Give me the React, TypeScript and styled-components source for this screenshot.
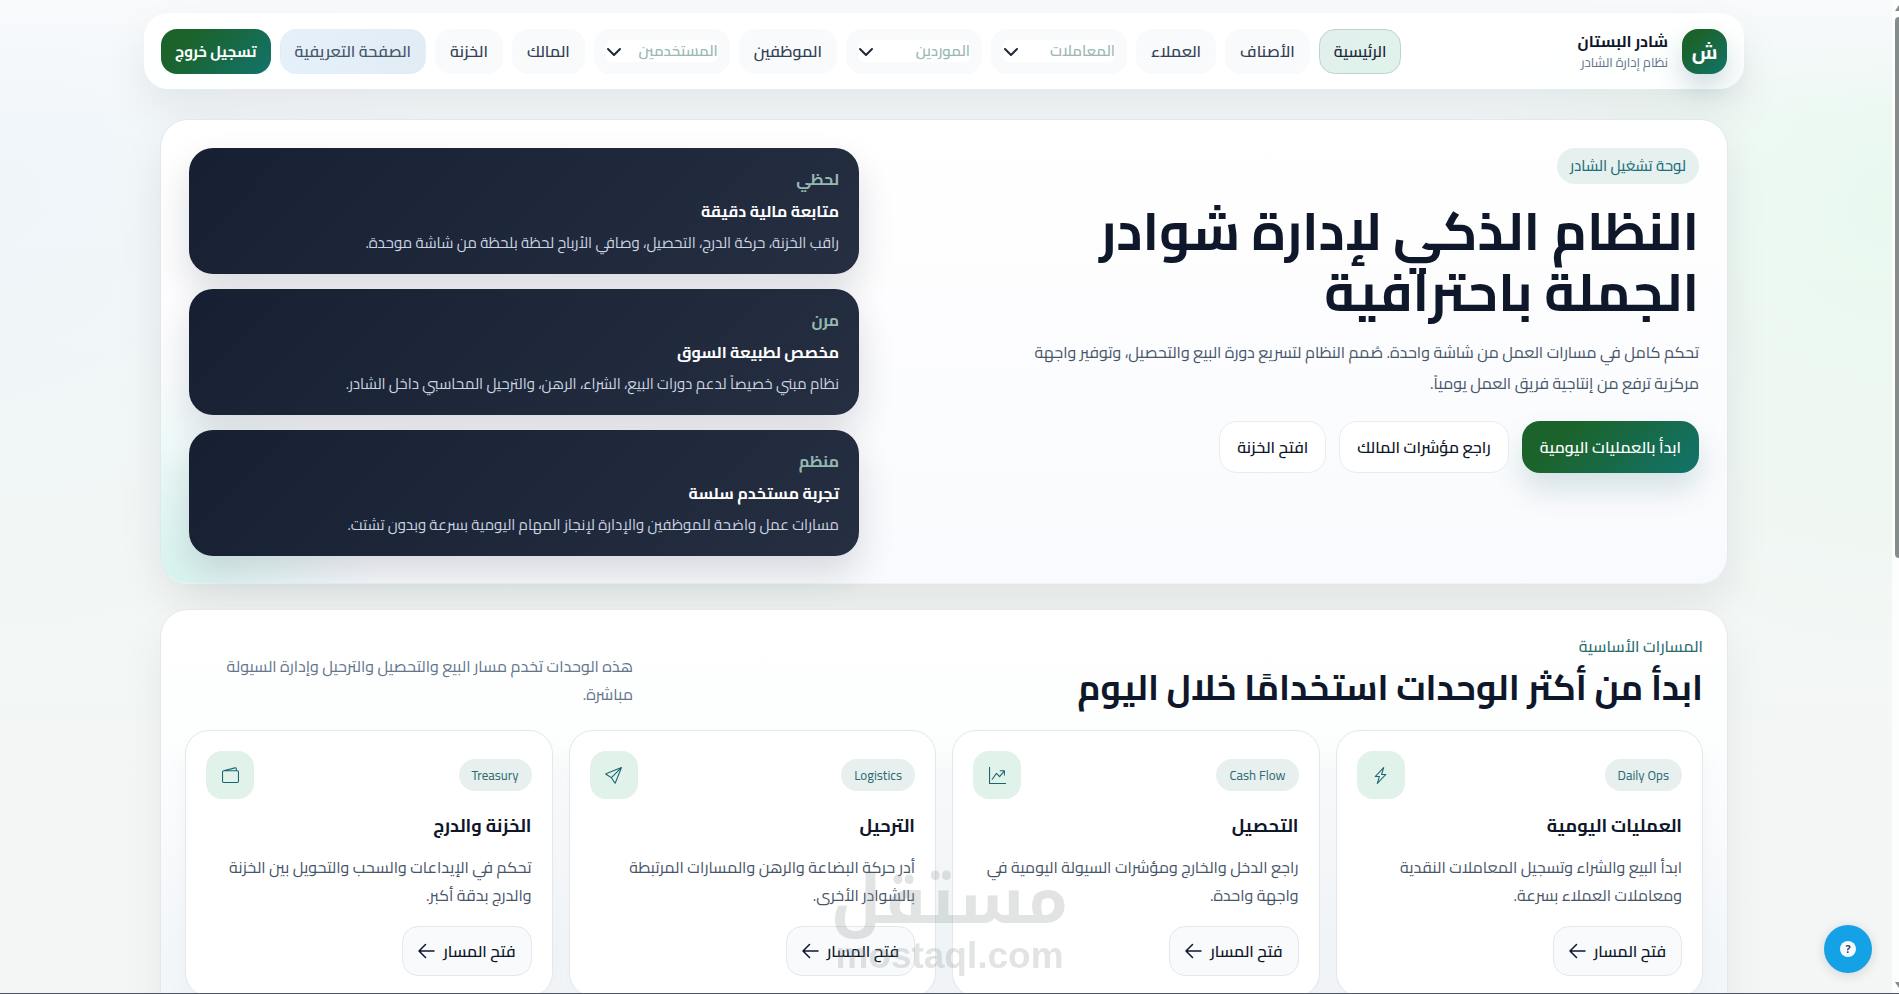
import React from 'react';
import styled, { createGlobalStyle, css } from 'styled-components';
import { BsGraphUpArrow, BsLightningCharge, BsSend, BsWallet2 } from 'react-icons/bs';

const GlobalStyle = createGlobalStyle`
  *, *::before, *::after { box-sizing: border-box; }
  html, body { margin: 0; padding: 0; }
  body, button, select {
    font-family: Cairo, 'Noto Sans Arabic', 'DejaVu Sans', sans-serif;
    font-size: 16px;
  }
  body { color: #0f172a; overflow: hidden; }
  h1, h2, h3, p { margin: 0; }
  a { color: inherit; text-decoration: none; }
  button { cursor: pointer; }
`;

const brandGradient = 'linear-gradient(135deg, #1b632b 25%, #12736c 100%)';

const Page = styled.div`
  direction: rtl;
  height: 100vh;
  overflow: hidden;
  padding: 13px 11px 0 0;
  background:
    linear-gradient(180deg, #f8fafc 0%, rgba(248, 250, 252, 0) 12%),
    radial-gradient(circle at 100% 20%, rgba(226, 248, 235, 0.7), transparent 22%),
    radial-gradient(circle at 0% 20%, rgba(230, 241, 249, 0.45), transparent 22%),
    linear-gradient(180deg, #f8fafc 0%, #f3f7f5 50%, #f3f6f4 100%);
`;

const Header = styled.header`
  display: flex;
  align-items: center;
  justify-content: space-between;
  max-width: 1600px;
  height: 76px;
  margin: 0 auto 30px;
  padding: 0 16px;
  border: 1px solid #fff;
  border-radius: 24px;
  background: rgba(255, 255, 255, 0.9);
  box-shadow: 0 20px 44px rgba(15, 23, 42, 0.08);
`;

const Brand = styled.a`
  display: flex;
  align-items: center;
  gap: 14px;
`;

const BrandMark = styled.span`
  display: grid;
  place-items: center;
  width: 45px;
  height: 45px;
  border-radius: 16px;
  background: ${brandGradient};
  box-shadow: 0 14px 28px rgba(15, 80, 90, 0.2);
  color: #fff;
  font-size: 20px;
  font-weight: 700;
`;

const BrandText = styled.span`
  display: flex;
  flex-direction: column;
`;

const BrandName = styled.strong`
  font-size: 16px;
  font-weight: 700;
  line-height: 22px;
`;

const BrandNote = styled.small`
  color: #64748b;
  font-size: 13px;
  line-height: 20px;
`;

const Nav = styled.nav`
  display: flex;
  gap: 9px;
`;

const pill = css`
  display: flex;
  align-items: center;
  justify-content: center;
  height: 45px;
  padding: 0 14px;
  border: 1px solid transparent;
  border-radius: 16px;
  font-weight: 600;
  white-space: nowrap;
`;

const NavLink = styled.a<{ $tone?: 'active' | 'info' }>`
  ${pill}
  color: #334155;
  background: #f9fafc;
  ${({ $tone }) => $tone === 'active' && css`
    border-color: #bcd3d2;
    background: linear-gradient(135deg, #e2efee, #e0f3e8);
    color: #1e293b;
  `}
  ${({ $tone }) => $tone === 'info' && css`
    background: linear-gradient(90deg, #e5f0fb, #e2ecf5);
    color: #475569;
  `}
`;

const LogoutButton = styled.button`
  ${pill}
  padding: 0 13px;
  background: ${brandGradient} border-box;
  color: #fff;
  font-size: 15px;
  font-weight: 700;
`;

const SelectPill = styled.div`
  ${pill}
  position: relative;
  padding: 0 11px;
  background: #f9fafc;
`;

const NavSelect = styled.select`
  appearance: none;
  width: 112px;
  height: 22px;
  padding: 0;
  border: 0;
  border-radius: 6px;
  background: #fff;
  color: #9bb8b4;
  font-size: 15px;
  font-weight: 600;
  line-height: 22px;
`;

const SelectArrow = styled.svg`
  position: absolute;
  left: 11px;
  top: 14px;
  width: 16px;
  height: 16px;
  pointer-events: none;
`;

const Main = styled.main`
  display: flex;
  flex-direction: column;
  gap: 25px;
  max-width: 1568px;
  margin: 0 auto;
`;

const Hero = styled.section`
  display: grid;
  grid-template-columns: 6fr 5fr;
  gap: 36px;
  padding: 28px 28px 27px;
  border: 1px solid #e2e8f0;
  border-bottom-color: #eef3f6;
  border-radius: 28px;
  background:
    radial-gradient(circle at 0% 100%, rgba(187, 240, 228, 0.55), transparent 13%),
    linear-gradient(180deg, #fff, #f9fafd);
  box-shadow: 0 20px 44px rgba(15, 23, 42, 0.08);
`;

const HeroCopy = styled.div`
  display: flex;
  flex-direction: column;
  align-items: flex-start;
`;

const HeroBadge = styled.span`
  height: 36px;
  margin-bottom: 16px;
  padding: 0 13px;
  border-radius: 18px;
  background: #e6f0ee;
  color: #1d7079;
  font-size: 15px;
  font-weight: 500;
  line-height: 36px;
`;

const HeroTitle = styled.h1`
  max-width: 680px;
  margin-bottom: 15px;
  font-size: 53px;
  font-weight: 700;
  line-height: 61px;
`;

const HeroText = styled.p`
  max-width: 690px;
  margin-bottom: 22px;
  color: #475569;
  font-size: 16px;
  line-height: 31px;
`;

const HeroActions = styled.div`
  display: flex;
  gap: 13px;
`;

const ActionButton = styled.button<{ $primary?: boolean }>`
  height: 52px;
  padding: 0 17px;
  border: 1px solid #e7edf1;
  border-radius: 18px;
  background: #fff;
  color: #0f172a;
  font-weight: 600;
  white-space: nowrap;
  ${({ $primary }) => $primary && css`
    border-color: transparent;
    background: ${brandGradient} border-box;
    box-shadow: 0 16px 30px rgba(15, 95, 100, 0.16);
    color: #fff;
  `}
`;

const HeroCards = styled.div`
  display: flex;
  flex-direction: column;
  gap: 15px;
`;

const HeroCard = styled.article`
  display: flex;
  flex-direction: column;
  gap: 6px;
  padding: 18px 20px;
  border-radius: 24px;
  background: linear-gradient(135deg, #172033, #262e41);
  box-shadow: 0 18px 36px rgba(15, 23, 42, 0.14);
  color: #fff;
  line-height: 26px;
`;

const HeroCardLabel = styled.span`
  color: #93b9b1;
  font-weight: 700;
`;

const HeroCardTitle = styled.h3`
  font-size: 16px;
  font-weight: 700;
`;

const HeroCardText = styled.p`
  color: #cbd5e1;
  font-size: 15px;
`;

const Panel = styled.section`
  padding: 24px 24px 40px;
  border: 1px solid #e2e8f0;
  border-radius: 28px;
  background: linear-gradient(180deg, #fff 0%, #fdfefe 28%, #f4f7fa 80%);
  box-shadow: 0 20px 44px rgba(15, 23, 42, 0.06);
`;

const PanelHead = styled.div`
  display: flex;
  align-items: flex-end;
  justify-content: space-between;
  margin-bottom: 22px;
`;

const Eyebrow = styled.p`
  margin-bottom: 8px;
  color: #2c6b6c;
  font-weight: 500;
  line-height: 24px;
`;

const PanelTitle = styled.h2`
  font-size: 35px;
  font-weight: 700;
  line-height: 42px;
`;

const PanelNote = styled.p`
  width: 448px;
  color: #64748b;
  line-height: 28px;
`;

const Cards = styled.div`
  display: grid;
  grid-template-columns: repeat(4, 1fr);
  gap: 16px;
`;

const Card = styled.article`
  display: flex;
  flex-direction: column;
  align-items: flex-start;
  padding: 20px;
  border: 1px solid #e2e8f0;
  border-radius: 24px;
  background: #fff;
  box-shadow: 0 14px 28px rgba(15, 23, 42, 0.03);
`;

const CardTop = styled.div`
  display: flex;
  align-items: center;
  justify-content: space-between;
  width: 100%;
  margin-bottom: 12px;
`;

const Tag = styled.span`
  height: 32px;
  padding: 0 13px;
  border-radius: 16px;
  background: #e7f0ee;
  color: #2c6b72;
  font-size: 13px;
  line-height: 32px;
`;

const IconTile = styled.span`
  display: grid;
  place-items: center;
  width: 48px;
  height: 48px;
  border-radius: 16px;
  background: #e0f2ea;
  color: #1a6670;
`;

const CardTitle = styled.h3`
  margin-bottom: 12px;
  font-size: 18px;
  font-weight: 700;
  line-height: 30px;
`;

const CardText = styled.p`
  margin-bottom: 17px;
  color: #475569;
  line-height: 28px;
`;

const CardLink = styled.a`
  display: flex;
  align-items: center;
  gap: 8px;
  height: 50px;
  padding: 0 15px;
  border: 1px solid #e2e8f0;
  border-radius: 16px;
  background: #f8fafc;
  font-weight: 600;
`;

const ArrowIcon = styled.svg`
  width: 17px;
  height: 16px;
  fill: none;
  stroke: currentColor;
  stroke-linecap: round;
  stroke-linejoin: round;
`;

const Watermark = styled.div`
  position: fixed;
  left: 50%;
  bottom: 17px;
  width: 230px;
  display: flex;
  flex-direction: column;
  align-items: center;
  transform: translateX(-50%);
  color: #8a9694;
  opacity: 0.26;
  pointer-events: none;
`;

const WatermarkArabic = styled.span`
  font-family: 'Noto Kufi Arabic', Cairo, sans-serif;
  font-size: 66px;
  font-weight: 700;
  line-height: 68px;
`;

const WatermarkLatin = styled.span`
  font-family: 'Liberation Sans', Arial, sans-serif;
  font-size: 37px;
  font-weight: 700;
  line-height: 42px;
`;

const HelpButton = styled.button`
  position: fixed;
  right: 27px;
  bottom: 21px;
  display: grid;
  place-items: center;
  width: 48px;
  height: 48px;
  padding: 0;
  border: 0;
  border-radius: 50%;
  background: #14a1e6;
  box-shadow: 0 2px 12px rgba(15, 23, 42, 0.14);
`;

const HelpMark = styled.span`
  width: 16px;
  height: 16px;
  border-radius: 50%;
  background: #f4fafd;
  color: #2c3e4a;
  font-family: 'Open Sans', sans-serif;
  font-size: 11px;
  font-weight: 700;
  line-height: 16px;
`;

const ScrollTrack = styled.div`
  position: fixed;
  top: 0;
  right: 0;
  bottom: 0;
  display: flex;
  flex-direction: column;
  align-items: flex-end;
  width: 7px;
  padding: 5px 0 6px;
  background: #fcfdfd;
`;

const ScrollThumb = styled.div`
  width: 4px;
  height: 55%;
  margin: 6px 0 auto;
  border-radius: 4px 0 0 4px;
  background: #858c8c;
`;

const ScrollArrow = styled.span<{ $down?: boolean }>`
  border-left: 4px solid transparent;
  border-${({ $down }) => ($down ? 'top' : 'bottom')}: 6px solid #858c8c;
`;

const BottomEdge = styled.div`
  position: fixed;
  left: 0;
  right: 0;
  bottom: 0;
  height: 1px;
  background: #4b5563;
`;

type NavItem = { label: string; menu?: boolean; tone?: 'active' | 'info' };

const navItems: NavItem[] = [
  { label: 'الرئيسية', tone: 'active' },
  { label: 'الأصناف' },
  { label: 'العملاء' },
  { label: 'المعاملات', menu: true },
  { label: 'الموردين', menu: true },
  { label: 'الموظفين' },
  { label: 'المستخدمين', menu: true },
  { label: 'المالك' },
  { label: 'الخزنة' },
  { label: 'الصفحة التعريفية', tone: 'info' },
];

const highlights = [
  {
    label: 'لحظي',
    title: 'متابعة مالية دقيقة',
    text: 'راقب الخزنة، حركة الدرج، التحصيل، وصافي الأرباح لحظة بلحظة من شاشة موحدة.',
  },
  {
    label: 'مرن',
    title: 'مخصص لطبيعة السوق',
    text: 'نظام مبني خصيصاً لدعم دورات البيع، الشراء، الرهن، والترحيل المحاسبي داخل الشادر.',
  },
  {
    label: 'منظم',
    title: 'تجربة مستخدم سلسة',
    text: 'مسارات عمل واضحة للموظفين والإدارة لإنجاز المهام اليومية بسرعة وبدون تشتت.',
  },
];

const tracks = [
  {
    tag: 'Daily Ops',
    icon: BsLightningCharge,
    title: 'العمليات اليومية',
    text: 'ابدأ البيع والشراء وتسجيل المعاملات النقدية ومعاملات العملاء بسرعة.',
  },
  {
    tag: 'Cash Flow',
    icon: BsGraphUpArrow,
    title: 'التحصيل',
    text: 'راجع الدخل والخارج ومؤشرات السيولة اليومية في واجهة واحدة.',
  },
  {
    tag: 'Logistics',
    icon: BsSend,
    title: 'الترحيل',
    text: 'أدر حركة البضاعة والرهن والمسارات المرتبطة بالشوادر الأخرى.',
  },
  {
    tag: 'Treasury',
    icon: BsWallet2,
    title: 'الخزنة والدرج',
    text: 'تحكم في الإيداعات والسحب والتحويل بين الخزنة والدرج بدقة أكبر.',
  },
];

function NavMenu({ label }: { label: string }) {
  return (
    <SelectPill>
      <NavSelect aria-label={label} defaultValue={label}>
        <option>{label}</option>
      </NavSelect>
      <SelectArrow viewBox="0 0 16 16" aria-hidden="true">
        <path d="m2 5 6 6 6-6" fill="none" stroke="#1e293b" strokeWidth="2" strokeLinecap="round" strokeLinejoin="round" />
      </SelectArrow>
    </SelectPill>
  );
}

export default function App() {
  return (
    <>
      <GlobalStyle />
      <Page lang="ar">
        <Header>
          <Brand href="#home">
            <BrandMark>ش</BrandMark>
            <BrandText>
              <BrandName>شادر البستان</BrandName>
              <BrandNote>نظام إدارة الشادر</BrandNote>
            </BrandText>
          </Brand>
          <Nav>
            {navItems.map(({ label, menu, tone }) =>
              menu ? (
                <NavMenu key={label} label={label} />
              ) : (
                <NavLink key={label} href="#" $tone={tone}>
                  {label}
                </NavLink>
              ),
            )}
            <LogoutButton type="button">تسجيل خروج</LogoutButton>
          </Nav>
        </Header>

        <Main>
          <Hero>
            <HeroCopy>
              <HeroBadge>لوحة تشغيل الشادر</HeroBadge>
              <HeroTitle>النظام الذكي لإدارة شوادر الجملة باحترافية</HeroTitle>
              <HeroText>
                تحكم كامل في مسارات العمل من شاشة واحدة. صُمم النظام لتسريع دورة البيع والتحصيل، وتوفير واجهة
                مركزية ترفع من إنتاجية فريق العمل يومياً.
              </HeroText>
              <HeroActions>
                <ActionButton type="button" $primary>ابدأ بالعمليات اليومية</ActionButton>
                <ActionButton type="button">راجع مؤشرات المالك</ActionButton>
                <ActionButton type="button">افتح الخزنة</ActionButton>
              </HeroActions>
            </HeroCopy>
            <HeroCards>
              {highlights.map(({ label, title, text }) => (
                <HeroCard key={label}>
                  <HeroCardLabel>{label}</HeroCardLabel>
                  <HeroCardTitle>{title}</HeroCardTitle>
                  <HeroCardText>{text}</HeroCardText>
                </HeroCard>
              ))}
            </HeroCards>
          </Hero>

          <Panel>
            <PanelHead>
              <div>
                <Eyebrow>المسارات الأساسية</Eyebrow>
                <PanelTitle>ابدأ من أكثر الوحدات استخدامًا خلال اليوم</PanelTitle>
              </div>
              <PanelNote>هذه الوحدات تخدم مسار البيع والتحصيل والترحيل وإدارة السيولة مباشرة.</PanelNote>
            </PanelHead>
            <Cards>
              {tracks.map(({ tag, icon: Icon, title, text }) => (
                <Card key={tag}>
                  <CardTop>
                    <Tag>{tag}</Tag>
                    <IconTile>
                      <Icon size={17} />
                    </IconTile>
                  </CardTop>
                  <CardTitle>{title}</CardTitle>
                  <CardText>{text}</CardText>
                  <CardLink href="#">
                    فتح المسار
                    <ArrowIcon viewBox="0 0 17 16" strokeWidth="1.5" aria-hidden="true">
                      <path d="M16 8H1M7.5 1.5 1 8l6.5 6.5" />
                    </ArrowIcon>
                  </CardLink>
                </Card>
              ))}
            </Cards>
          </Panel>
        </Main>
      </Page>

      <Watermark>
        <WatermarkArabic lang="ar">مستقل</WatermarkArabic>
        <WatermarkLatin>mostaql.com</WatermarkLatin>
      </Watermark>
      <HelpButton type="button" aria-label="المساعدة">
        <HelpMark>?</HelpMark>
      </HelpButton>
      <ScrollTrack>
        <ScrollArrow />
        <ScrollThumb />
        <ScrollArrow $down />
      </ScrollTrack>
      <BottomEdge />
    </>
  );
}
